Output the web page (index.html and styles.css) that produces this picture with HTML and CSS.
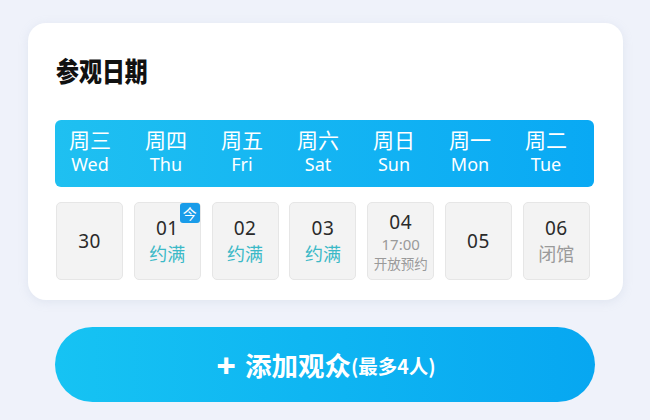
FILE: index.html
```html
<!DOCTYPE html>
<html lang="zh">
<head>
<meta charset="utf-8">
<link rel="stylesheet" href="styles.css">
</head>
<body>
<div class="page">
  <section class="card">
    <h1 class="title">参观日期</h1>
    <div class="week">
      <div class="wd"><span class="cn">周三</span><span class="en">Wed</span></div>
      <div class="wd"><span class="cn">周四</span><span class="en">Thu</span></div>
      <div class="wd"><span class="cn">周五</span><span class="en">Fri</span></div>
      <div class="wd"><span class="cn">周六</span><span class="en">Sat</span></div>
      <div class="wd"><span class="cn">周日</span><span class="en">Sun</span></div>
      <div class="wd"><span class="cn">周一</span><span class="en">Mon</span></div>
      <div class="wd"><span class="cn">周二</span><span class="en">Tue</span></div>
    </div>
    <div class="days">
      <div class="day"><span class="num">30</span></div>
      <div class="day"><span class="num">01</span><span class="full">约满</span><span class="today">今</span></div>
      <div class="day"><span class="num">02</span><span class="full">约满</span></div>
      <div class="day"><span class="num">03</span><span class="full">约满</span></div>
      <div class="day"><span class="num">04</span><span class="time">17:00</span><span class="open">开放预约</span></div>
      <div class="day"><span class="num">05</span></div>
      <div class="day"><span class="num">06</span><span class="closed">闭馆</span></div>
    </div>
  </section>
  <button class="add"><span class="plus">+</span><span class="label">添加观众</span><span class="max">(最多4人)</span></button>
</div>
</body>
</html>
```
FILE: styles.css
```css
* { box-sizing: border-box; }
html, body { margin: 0; padding: 0; }
body {
  width: 650px;
  height: 420px;
  overflow: hidden;
  background: #eff2fa;
  font-family: "Noto Sans", "Noto Sans CJK SC", sans-serif;
}
.page {
  padding: 23px 27px 0 28px;
  display: flex;
  flex-direction: column;
}
.card {
  width: 595px;
  height: 277px;
  background: #ffffff;
  border-radius: 18px;
  box-shadow: 0 2px 10px rgba(180, 190, 215, 0.25);
  padding: 30px 29px 0 27px;
  display: flex;
  flex-direction: column;
}
.title {
  margin: 0 0 0 1px;
  font-size: 27px;
  line-height: 36px;
  font-weight: 900;
  color: #111;
  font-family: "Noto Sans CJK SC", sans-serif;
  transform: scaleX(0.85);
  transform-origin: left center;
}
.week {
  margin-top: 31px;
  height: 67px;
  border-radius: 6px;
  background: linear-gradient(90deg, #1fc0f1 0%, #09a9f4 100%);
  display: grid;
  grid-template-columns: repeat(7, 70px);
  column-gap: 6px;
  padding: 0 0 4px 0;
  align-items: center;
}
.wd {
  display: flex;
  flex-direction: column;
  align-items: center;
  color: #fff;
}
.cn {
  font-family: "Noto Sans CJK SC", sans-serif;
  font-size: 21px;
  line-height: 25px;
}
.en {
  font-size: 18px;
  line-height: 25px;
}
.days {
  margin-top: 15px;
  display: flex;
  gap: 10.8px;
  padding-left: 1px;
}
.day {
  position: relative;
  width: 67px;
  height: 78px;
  background: #f3f3f3;
  border: 1px solid #e6e6e6;
  border-radius: 5px;
  display: flex;
  flex-direction: column;
  align-items: center;
  justify-content: center;
}
.num {
  font-size: 19px;
  line-height: 25px;
  color: #2a2a2a;
  letter-spacing: 0.5px;
}
.full {
  font-family: "Noto Sans CJK SC", sans-serif;
  font-size: 18px;
  line-height: 25px;
  color: #3bb9c7;
}
.closed {
  font-family: "Noto Sans CJK SC", sans-serif;
  font-size: 18px;
  line-height: 25px;
  color: #9a9a9a;
}
.time {
  font-size: 15px;
  line-height: 18px;
  color: #9a9a9a;
}
.open {
  font-family: "Noto Sans CJK SC", sans-serif;
  font-size: 13.5px;
  line-height: 20px;
  color: #9a9a9a;
}
.today {
  position: absolute;
  top: 0;
  right: 0;
  width: 20px;
  height: 20px;
  background: #199ce9;
  color: #fff;
  border-radius: 3px;
  font-family: "Noto Sans CJK SC", sans-serif;
  font-size: 14px;
  line-height: 20px;
  text-align: center;
}
.add {
  margin: 27px 0 0 27px;
  width: 540px;
  height: 75px;
  border: none;
  border-radius: 38px;
  background: linear-gradient(90deg, #16c3f3 0%, #07a7f1 100%);
  color: #fff;
  font-family: "Noto Sans CJK SC", sans-serif;
  font-weight: 700;
  display: flex;
  align-items: center;
  justify-content: center;
  padding: 0 0 0 2px;
}
.plus {
  font-family: "Noto Sans", sans-serif;
  font-size: 34px;
  line-height: 36px;
  font-weight: 800;
  margin-right: 9px;
}
.label {
  font-size: 26.5px;
  line-height: 36px;
}
.max {
  font-size: 19.5px;
  line-height: 36px;
  margin-top: 2px;
}
```
